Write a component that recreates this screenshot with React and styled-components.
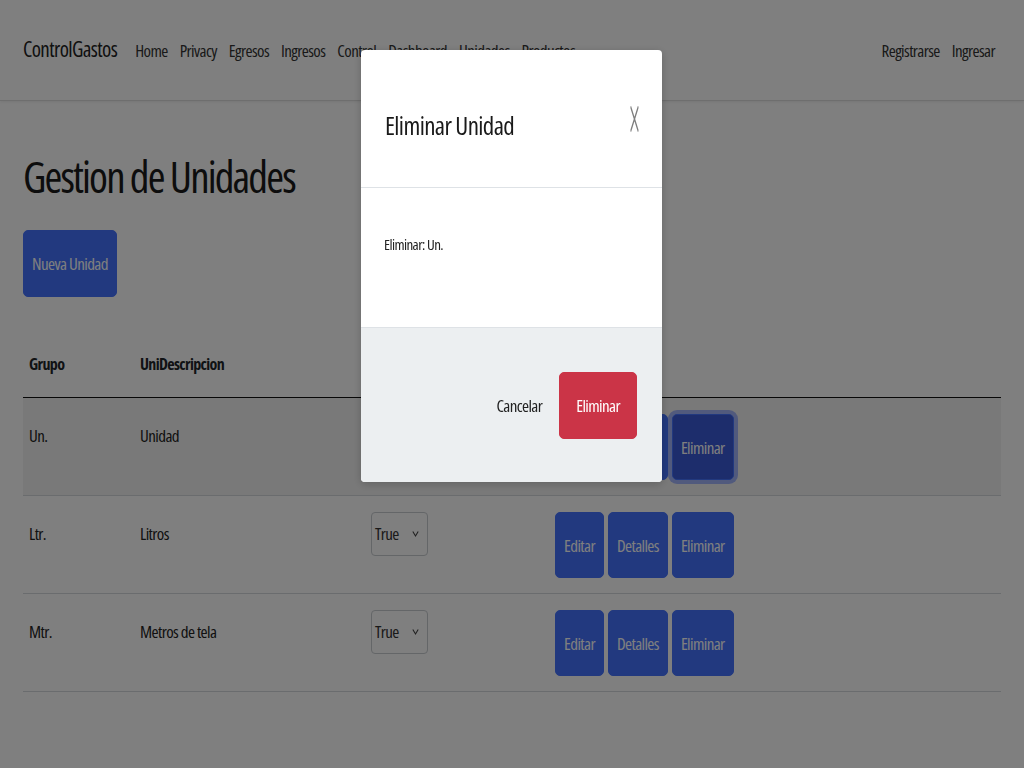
import React from 'react'
import styled, { createGlobalStyle } from 'styled-components'

const GlobalStyle = createGlobalStyle`
  html, body {
    margin: 0;
    padding: 0;
    background: #ffffff;
  }
  body {
    font-family: "Open Sans", "Noto Sans", sans-serif;
    font-stretch: 75%;
    font-size: 17px;
    letter-spacing: -0.035em;
    color: #212529;
  }
  button {
    font-family: inherit;
    font-stretch: inherit;
    letter-spacing: inherit;
  }
`

const Page = styled.div`
  width: 1024px;
  height: 768px;
  overflow: hidden;
  background: #ffffff;
`

const Navbar = styled.nav`
  height: 101px;
  display: flex;
  align-items: center;
  padding: 0 29px 0 23px;
  border-bottom: 1px solid #dcdcdc;
  box-sizing: border-box;
  box-shadow: 0 1px 3px rgba(0, 0, 0, 0.08);
`

const Brand = styled.a`
  font-size: 21px;
  color: #222;
  margin-right: 18px;
  margin-top: -2px;
`

const NavLinks = styled.div`
  display: flex;
  gap: 12px;
  flex: 1;
`

const NavRight = styled.div`
  display: flex;
  gap: 12px;
`

const NavLink = styled.a`
  font-size: 17px;
  color: #333;
`

const Content = styled.main`
  padding: 46px 23px 0 23px;
`

const Title = styled.h1`
  font-size: 43px;
  font-weight: 500;
  letter-spacing: -0.043em;
  margin: 0 0 23px 0;
  line-height: 60px;
  color: #1a1a1a;
`

const Button = styled.button`
  font-size: 17px;
  color: #fff;
  background: ${(p) => (p.danger ? '#cb3447' : p.pressed ? '#3a5ad8' : '#4473ff')};
  border: 1px solid ${(p) => (p.danger ? '#cb3447' : '#4473ff')};
  border-radius: 5px;
  height: ${(p) => p.h || 66}px;
  padding: 0 ${(p) => p.px || 8}px;
  box-shadow: ${(p) => (p.pressed ? '0 0 0 4px rgba(110, 140, 255, 0.6)' : 'none')};
  cursor: pointer;
`

const Table = styled.table`
  width: 978px;
  border-collapse: collapse;
  margin-top: 33px;
`

const Th = styled.th`
  text-align: left;
  font-size: 16px;
  font-weight: 700;
  letter-spacing: -0.04em;
  line-height: 24px;
  padding: 22px 6px 21px 6px;
  border-bottom: 1px solid #111;
  width: ${(p) => p.w || 'auto'};
`

const Row = styled.tr`
  background: ${(p) => (p.striped ? '#f3f3f3' : 'transparent')};
  border-bottom: 1px solid #d4d8dc;
`

const Td = styled.td`
  vertical-align: top;
  padding: 16px 6px 15px 6px;
  font-size: 17px;
  line-height: 44px;
  color: #222;
`

const Actions = styled.div`
  display: flex;
  gap: 4px;
`

const Select = styled.div`
  width: 57px;
  height: 44px;
  box-sizing: border-box;
  border: 1px solid #c8ccd0;
  border-radius: 4px;
  display: flex;
  align-items: center;
  justify-content: space-between;
  padding: 0 8px 0 3px;
  font-size: 17px;
  color: #333;
`

const Chevron = () => (
  <svg width="7" height="10" viewBox="0 0 7 10">
    <path d="M0.8 2.5 L3.5 7 L6.2 2.5" fill="none" stroke="#444" strokeWidth="1.1" />
  </svg>
)

const Backdrop = styled.div`
  position: fixed;
  inset: 0;
  background: rgba(0, 0, 0, 0.5);
`

const Modal = styled.div`
  position: fixed;
  left: 361px;
  top: 50px;
  width: 301px;
  background: #fff;
  border-radius: 4px;
  box-shadow: 0 2px 8px rgba(0, 0, 0, 0.2);
  overflow: hidden;
`

const ModalHeader = styled.div`
  height: 138px;
  box-sizing: border-box;
  display: flex;
  align-items: center;
  justify-content: space-between;
  padding: 0 21px 0 24px;
  border-bottom: 1px solid #dee2e6;
`

const ModalTitle = styled.h5`
  margin: 12px 0 0 0;
  font-size: 25px;
  font-weight: 500;
  letter-spacing: -0.025em;
  color: #1a1a1a;
`

const CloseButton = styled.button`
  border: none;
  background: transparent;
  padding: 0;
  width: 13px;
  height: 26px;
  opacity: 0.5;
  cursor: pointer;
  display: flex;
`

const ModalBody = styled.div`
  height: 139px;
  box-sizing: border-box;
  padding: 45px 23px 0 23px;
  font-size: 15px;
  line-height: 22px;
  color: #222;
`

const ModalFooter = styled.div`
  height: 155px;
  box-sizing: border-box;
  background: #eceff1;
  border-top: 1px solid #dee2e6;
  display: flex;
  align-items: center;
  justify-content: flex-end;
  padding: 0 25px 0 0;
`

const LinkButton = styled.button`
  font-size: 17px;
  color: #222;
  background: transparent;
  border: none;
  padding: 0 17px 0 8px;
  height: 66px;
  cursor: pointer;
`

const units = [
  { grupo: 'Un.', desc: 'Unidad' },
  { grupo: 'Ltr.', desc: 'Litros' },
  { grupo: 'Mtr.', desc: 'Metros de tela' },
]

const App = () => {
  return (
    <Page>
      <GlobalStyle />
      <Navbar>
        <Brand>ControlGastos</Brand>
        <NavLinks>
          <NavLink>Home</NavLink>
          <NavLink>Privacy</NavLink>
          <NavLink>Egresos</NavLink>
          <NavLink>Ingresos</NavLink>
          <NavLink>Control</NavLink>
          <NavLink>Dashboard</NavLink>
          <NavLink>Unidades</NavLink>
          <NavLink>Productos</NavLink>
        </NavLinks>
        <NavRight>
          <NavLink>Registrarse</NavLink>
          <NavLink>Ingresar</NavLink>
        </NavRight>
      </Navbar>

      <Content>
        <Title>Gestion de Unidades</Title>
        <Button h={67} px={8}>Nueva Unidad</Button>

        <Table>
          <thead>
            <tr>
              <Th w="99px">Grupo</Th>
              <Th w="219px">UniDescripcion</Th>
              <Th w="172px"></Th>
              <Th></Th>
            </tr>
          </thead>
          <tbody>
            {units.map((u, i) => (
              <Row key={u.grupo} striped={i === 0}>
                <Td>{u.grupo}</Td>
                <Td>{u.desc}</Td>
                <Td>
                  <Select>
                    True <Chevron />
                  </Select>
                </Td>
                <Td>
                  <Actions>
                    <Button>Editar</Button>
                    <Button>Detalles</Button>
                    <Button pressed={i === 0}>Eliminar</Button>
                  </Actions>
                </Td>
              </Row>
            ))}
          </tbody>
        </Table>
      </Content>

      <Backdrop />
      <Modal>
        <ModalHeader>
          <ModalTitle>Eliminar Unidad</ModalTitle>
          <CloseButton aria-label="Close">
            <svg width="13" height="26" viewBox="0 0 16 16" preserveAspectRatio="none">
              <path
                d="M.293.293a1 1 0 0 1 1.414 0L8 6.586 14.293.293a1 1 0 1 1 1.414 1.414L9.414 8l6.293 6.293a1 1 0 0 1-1.414 1.414L8 9.414l-6.293 6.293a1 1 0 0 1-1.414-1.414L6.586 8 .293 1.707a1 1 0 0 1 0-1.414z"
                fill="#000"
                transform="translate(3 0) scale(0.62 1)"
              />
            </svg>
          </CloseButton>
        </ModalHeader>
        <ModalBody>Eliminar: Un.</ModalBody>
        <ModalFooter>
          <LinkButton>Cancelar</LinkButton>
          <Button danger h={67} px={16}>Eliminar</Button>
        </ModalFooter>
      </Modal>
    </Page>
  )
}

export default App
